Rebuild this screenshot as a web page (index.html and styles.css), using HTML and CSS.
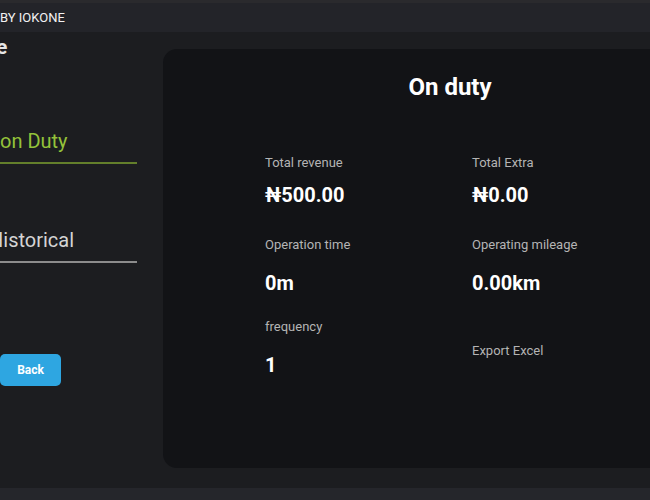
FILE: index.html
```html
<!DOCTYPE html>
<html lang="en">
<head>
    <meta charset="UTF-8">
    <meta name="viewport" content="width=device-width, initial-scale=1.0">
    <title>On duty</title>
    <link rel="stylesheet" href="styles.css">
</head>
<body>
    <div class="topbar">BY IOKONE</div>

    <div class="main">
        <div class="sidebar">
            <div class="side-title">e</div>
            <div class="tab tab-active">on Duty</div>
            <div class="tab tab-history">Historical</div>
            <button class="back-btn">Back</button>
        </div>

        <div class="card">
            <h1 class="card-title">On duty</h1>
            <div class="stats">
                <div class="stat stat-first">
                    <div class="stat-label">Total revenue</div>
                    <div class="stat-value">₦500.00</div>
                </div>
                <div class="stat stat-first">
                    <div class="stat-label">Total Extra</div>
                    <div class="stat-value">₦0.00</div>
                </div>
                <div class="stat">
                    <div class="stat-label">Operation time</div>
                    <div class="stat-value">0m</div>
                </div>
                <div class="stat">
                    <div class="stat-label">Operating mileage</div>
                    <div class="stat-value">0.00km</div>
                </div>
                <div class="stat">
                    <div class="stat-label">frequency</div>
                    <div class="stat-value">1</div>
                </div>
                <div class="stat">
                    <a class="export-link" href="#">Export Excel</a>
                </div>
            </div>
        </div>
    </div>

    <div class="bottombar"></div>
</body>
</html>
```

FILE: styles.css
```css
body {
    font-family: Roboto, "Noto Sans", Arial, sans-serif;
    background-color: #1c1d20;
    margin: 0;
    width: 650px;
    height: 500px;
    overflow: hidden;
    color: #fff;
}

/* 顶部标题栏 */
.topbar {
    height: 29px;
    border-top: 3px solid #2a2a2d;
    background-color: #232429;
    font-size: 13px;
    line-height: 29px;
    color: #f2f2f2;
    white-space: nowrap;
}

.main {
    display: flex;
    height: 452px;
}

/* 左侧菜单 */
.sidebar {
    width: 163px;
    flex-shrink: 0;
    overflow: hidden;
}

.side-title {
    font-size: 21px;
    font-weight: bold;
    line-height: 26px;
    margin-top: 2px;
    margin-left: -4px;
    color: #e6e6e6;
}

.tab {
    width: 137px;
    font-size: 20px;
    line-height: 26px;
    padding-bottom: 8px;
    white-space: nowrap;
}

.tab-active {
    margin-top: 68px;
    color: #94c23a;
    border-bottom: 2px solid #637f2b;
}

.tab-history {
    margin-top: 63px;
    color: #d4d4d4;
    text-indent: -11px;
    border-bottom: 2px solid #8c8c8c;
}

.back-btn {
    display: block;
    margin-top: 91px;
    width: 61px;
    height: 32px;
    border: none;
    border-radius: 5px;
    background-color: #2ea6e1;
    color: #fff;
    font-family: inherit;
    font-size: 12px;
    font-weight: bold;
    padding: 0;
}

/* 统计卡片 */
.card {
    width: 574px;
    flex-shrink: 0;
    margin-top: 17px;
    height: 419px;
    background-color: #121316;
    border-radius: 14px;
    box-sizing: border-box;
    padding-top: 22px;
}

.card-title {
    margin: 0;
    font-size: 24px;
    line-height: 32px;
    text-align: center;
}

.stats {
    display: grid;
    grid-template-columns: 207px 207px;
    grid-auto-rows: 82px;
    margin-top: 52px;
    margin-left: 102px;
}

.stat-label {
    font-size: 13px;
    line-height: 16px;
    color: #b4b4b4;
}

.stat-value {
    margin-top: 18px;
    font-size: 20px;
    font-weight: bold;
    line-height: 24px;
}

.stat-first .stat-value {
    margin-top: 12px;
}

.export-link {
    display: block;
    margin-top: 24px;
    font-size: 13px;
    line-height: 16px;
    color: #b4b4b4;
    text-decoration: none;
}

.bottombar {
    height: 12px;
    margin-top: 4px;
    background-color: #25262b;
    border-bottom: 3px solid #1a1a1c;
}
```
